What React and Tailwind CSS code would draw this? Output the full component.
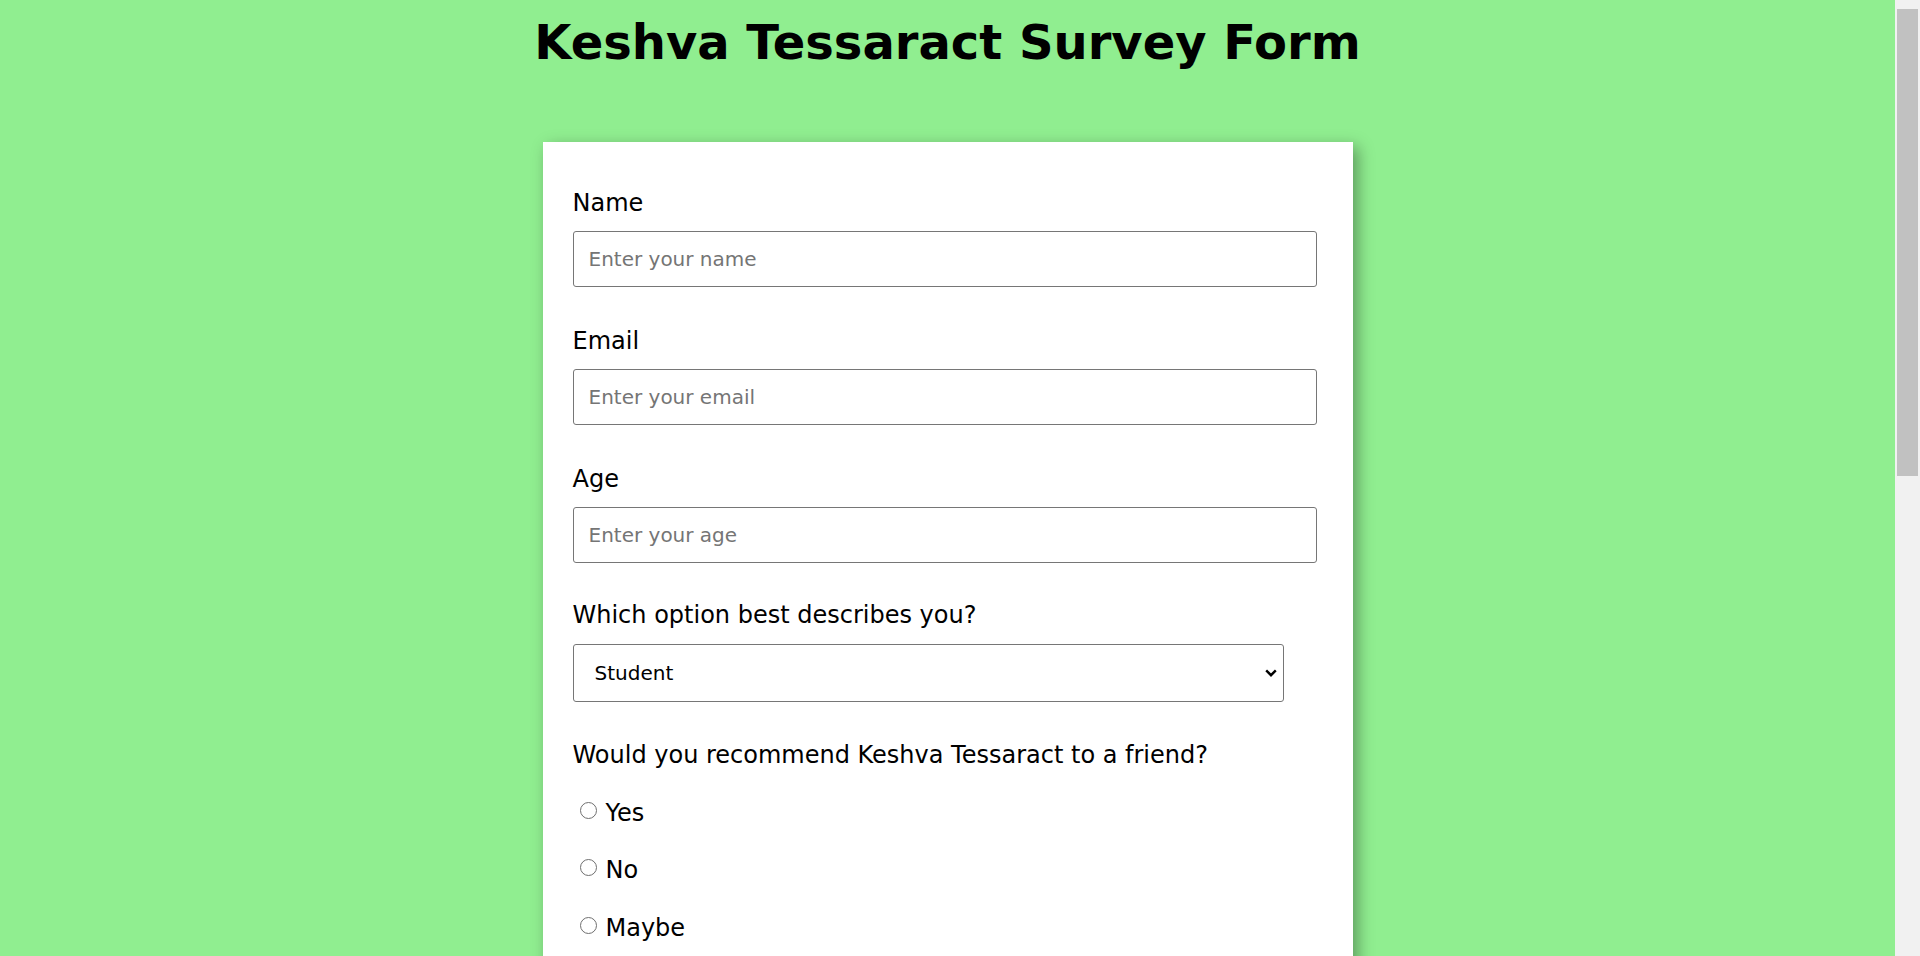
import { useState } from 'react';

const font = { fontFamily: '"DejaVu Sans", Verdana, sans-serif' };

const Field = ({ label, placeholder, type = 'text', gap = 'mb-[40px]' }) => (
    <div className={gap}>
        <label className="block text-[24px] leading-[28px] text-black mb-[14px]">{label}</label>
        <input
            type={type}
            placeholder={placeholder}
            className="block w-[744px] h-[56px] px-[15px] text-[20px] text-black border border-[#767676] rounded-[3px] bg-white outline-none placeholder:text-[#757575]"
        />
    </div>
);

const Chevron = () => (
    <svg className="absolute right-[7px] top-1/2 -translate-y-1/2 pointer-events-none" width="12" height="8" viewBox="0 0 12 8">
        <path d="M1.2 1.4 L6 6.2 L10.8 1.4" fill="none" stroke="#000" strokeWidth="2.4" />
    </svg>
);

const Choice = ({ name, value, type = 'radio' }) => (
    <label className="flex items-center h-[57.5px] text-[24px] leading-[28px] text-black">
        <span className="inline-block">
            <input
                type={type}
                name={name}
                className={
                    type === 'radio'
                        ? 'appearance-none w-[17px] h-[17px] ml-[7px] mr-[9px] mb-[2px] rounded-full border-[1.5px] border-[#6f6f6f] bg-white align-baseline'
                        : 'appearance-none w-[17px] h-[17px] ml-[7px] mr-[9px] mb-[2px] rounded-[2px] border-[1.5px] border-[#6f6f6f] bg-white align-baseline'
                }
            />
            {value}
        </span>
    </label>
);

const App = () => {
    const [role, setRole] = useState('student');

    return (
        <div className="flex h-screen" style={font}>
            <main className="flex-1 overflow-y-auto bg-[#90ee90]">
                <h1 className="pt-[12px] text-center text-[48px] leading-[60px] font-bold text-black">
                    Keshva Tessaract Survey Form
                </h1>

                <form className="w-[810px] mx-auto mt-[70px] mb-[80px] bg-white pt-[47px] pb-[47px] px-[30px] shadow-[5px_5px_15px_rgba(0,0,0,0.35)]">
                    <Field label="Name" placeholder="Enter your name" />
                    <Field label="Email" placeholder="Enter your email" type="email" />
                    <Field label="Age" placeholder="Enter your age" type="number" gap="mb-[38px]" />

                    <div className="mb-[39px]">
                        <label className="block text-[24px] leading-[28px] text-black mb-[15px]">Which option best describes you?</label>
                        <div className="relative w-[711px]">
                            <select
                                value={role}
                                onChange={(e) => setRole(e.target.value)}
                                className="appearance-none block w-full h-[58px] pl-[21px] text-[20px] text-black bg-white border border-[#767676] rounded-[3px] outline-none"
                            >
                                <option value="student">Student</option>
                                <option value="professional">Full Time Job</option>
                                <option value="learner">Full Time Learner</option>
                                <option value="other">Prefer not to say</option>
                            </select>
                            <Chevron />
                        </div>
                    </div>

                    <div className="mb-[40px]">
                        <label className="block text-[24px] leading-[28px] text-black">Would you recommend Keshva Tessaract to a friend?</label>
                        <div className="mt-[15px]">
                            <Choice name="recommend" value="Yes" />
                            <Choice name="recommend" value="No" />
                            <Choice name="recommend" value="Maybe" />
                        </div>
                    </div>

                    <div className="mb-[40px]">
                        <label className="block text-[24px] leading-[28px] text-black mb-[14px]">What is your favorite feature?</label>
                        <div className="relative w-[711px]">
                            <select className="appearance-none block w-full h-[58px] pl-[21px] text-[20px] text-black bg-white border border-[#767676] rounded-[3px] outline-none">
                                <option>Challenges</option>
                                <option>Projects</option>
                                <option>Community</option>
                            </select>
                            <Chevron />
                        </div>
                    </div>

                    <div className="mb-[40px]">
                        <label className="block text-[24px] leading-[28px] text-black">What would you like to see improved?</label>
                        <div className="mt-[15px]">
                            <Choice type="checkbox" name="improve" value="Front-end Projects" />
                            <Choice type="checkbox" name="improve" value="Back-end Projects" />
                            <Choice type="checkbox" name="improve" value="Videos" />
                            <Choice type="checkbox" name="improve" value="Forum" />
                        </div>
                    </div>

                    <div className="mb-[40px]">
                        <label className="block text-[24px] leading-[28px] text-black mb-[14px]">Any comments or suggestions?</label>
                        <textarea
                            placeholder="Enter your comment here..."
                            className="block w-[744px] h-[150px] px-[15px] py-[12px] text-[20px] border border-[#767676] rounded-[3px] outline-none resize-none placeholder:text-[#757575]"
                        />
                    </div>

                    <button type="submit" className="block w-[744px] h-[56px] bg-[#228b22] text-white text-[22px] rounded-[3px]">
                        Submit
                    </button>
                </form>
            </main>

            {/* scrollbar strip */}
            <aside className="w-[25px] shrink-0 bg-[#f1f1f1] pt-[9px] px-[2px]">
                <div className="h-[467px] bg-[#c1c1c1]"></div>
            </aside>
        </div>
    );
};

export default App;
